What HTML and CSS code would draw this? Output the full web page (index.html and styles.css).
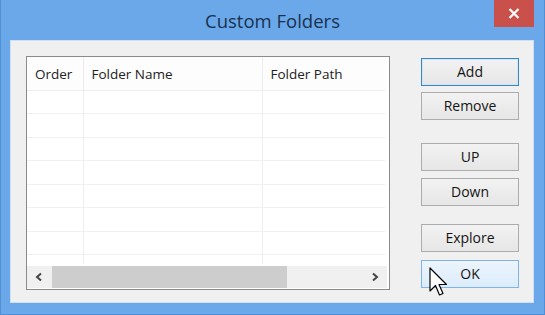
FILE: index.html
```html
<!DOCTYPE html>
<html lang="en">
<head>
  <meta charset="UTF-8">
  <meta name="viewport" content="width=device-width, initial-scale=1.0">
  <title>Custom Folders</title>
  <link rel="stylesheet" href="styles.css">
</head>
<body>
  <div class="window">
    <div class="titlebar">
      <span></span>
      <h1 class="title">Custom Folders</h1>
      <button class="close" type="button" aria-label="Close">
        <svg width="12" height="11" viewBox="0 0 12 11"><path d="M1.5 1 L10.5 10 M10.5 1 L1.5 10" stroke="#fff" stroke-width="2.2"/></svg>
      </button>
    </div>

    <div class="client">
      <div class="listview">
        <table class="grid">
          <thead>
            <tr>
              <th class="col-order">Order</th>
              <th class="col-name">Folder Name</th>
              <th class="col-path">Folder Path</th>
            </tr>
          </thead>
          <tbody>
            <tr><td></td><td></td><td></td></tr>
            <tr><td></td><td></td><td></td></tr>
            <tr><td></td><td></td><td></td></tr>
            <tr><td></td><td></td><td></td></tr>
            <tr><td></td><td></td><td></td></tr>
            <tr><td></td><td></td><td></td></tr>
            <tr><td></td><td></td><td></td></tr>
            <tr class="last"><td></td><td></td><td></td></tr>
          </tbody>
        </table>
        <div class="hscroll">
          <span class="arrow">
            <svg width="10" height="10" viewBox="0 0 10 10"><path d="M7 1.5 L3 5 L7 8.5" fill="none" stroke="#444" stroke-width="2"/></svg>
          </span>
          <div class="track"><div class="thumb"></div></div>
          <span class="arrow">
            <svg width="10" height="10" viewBox="0 0 10 10"><path d="M3 1.5 L7 5 L3 8.5" fill="none" stroke="#444" stroke-width="2"/></svg>
          </span>
        </div>
      </div>

      <div class="buttons">
        <button type="button" class="btn focused">Add</button>
        <button type="button" class="btn remove">Remove</button>
        <button type="button" class="btn up">UP</button>
        <button type="button" class="btn down">Down</button>
        <button type="button" class="btn explore">Explore</button>
        <button type="button" class="btn hover">OK</button>
      </div>
    </div>

    <svg class="cursor" width="20" height="32" viewBox="0 0 20 32">
      <path d="M1 1 L1 24 L6.5 18.5 L10.5 28 L14 26.5 L10 17.5 L17.5 17.5 Z" fill="#fff" stroke="#000" stroke-width="1.2" stroke-linejoin="round"/>
    </svg>
  </div>
</body>
</html>
```

FILE: styles.css
```css
body {
  margin: 0;
  padding: 0;
  font-family: "Open Sans", "Noto Sans", Arial, sans-serif;
}

.window {
  position: relative;
  width: 545px;
  height: 315px;
  box-sizing: border-box;
  background-color: #6aa8ea;
  border: 1px solid #4f8fd6;
  border-top: none;
  display: flex;
  flex-direction: column;
  padding: 0 10px 11px 9px;
}

.titlebar {
  flex-shrink: 0;
  height: 40px;
  display: grid;
  grid-template-columns: 1fr auto 1fr;
  align-items: start;
  margin: 0 -10px 0 -9px;
}

.title {
  margin: 0;
  padding-top: 8px;
  font-weight: normal;
  font-size: 18.5px;
  color: #19324f;
}

.close {
  justify-self: end;
  width: 40px;
  height: 27px;
  margin-right: 10px;
  border: none;
  padding: 0;
  background-color: #c9504b;
  display: flex;
  align-items: center;
  justify-content: center;
}

.client {
  flex: 1;
  background-color: #f0f0f0;
  border: 1px solid #cfe0f3;
  display: flex;
  align-items: flex-start;
  padding: 15px 14px 12px 15px;
}

.listview {
  flex-shrink: 0;
  width: 360px;
  height: 232px;
  border: 1px solid #8a8a8a;
  background-color: #fff;
  display: flex;
  flex-direction: column;
  padding-right: 2px;
}

.grid {
  border-collapse: collapse;
  table-layout: fixed;
  width: 358px;
  font-size: 13.5px;
  color: #222;
}

.grid th {
  box-sizing: border-box;
  height: 33px;
  font-weight: normal;
  text-align: left;
  padding: 1px 0 0 8px;
  background-color: #fdfdfd;
  border-right: 1px solid #ececec;
  border-bottom: 1px solid #eeeeee;
}

.col-order { width: 56px; }
.col-name { width: 179px; }

.grid td {
  height: 22.5px;
  padding: 0;
  border-right: 1px solid #f0f0f0;
  border-bottom: 1px solid #f0f0f0;
}

.grid .last td {
  height: 9px;
  border-bottom: none;
}

.grid th:last-child,
.grid td:last-child {
  border-right: none;
}

.hscroll {
  margin-top: auto;
  height: 22px;
  width: 360px;
  display: flex;
  background-color: #f0f0f0;
  margin-bottom: 1px;
}

.arrow {
  width: 24px;
  display: flex;
  align-items: center;
  justify-content: center;
}

.track {
  flex: 1;
  display: flex;
  align-items: stretch;
}

.thumb {
  width: 235px;
  margin: 0 0 0 1px;
  background-color: #cdcdcd;
}

.buttons {
  margin-left: 31px;
  width: 99px;
  display: flex;
  flex-direction: column;
}

.btn {
  height: 28px;
  margin: 0;
  font-family: "Open Sans", "Noto Sans", Arial, sans-serif;
  font-size: 14px;
  color: #151515;
  border: 1px solid #acacac;
  background: linear-gradient(#f2f2f2, #e6e6e6);
  padding: 0 0 1px;
}

.btn.focused {
  margin-top: 2px;
  border: 1px solid #3a87c8;
  box-shadow: inset 0 0 0 1px #d2e6f7;
}

.btn.remove { margin-top: 6px; }
.btn.up { margin-top: 23px; }
.btn.down { margin-top: 7px; }
.btn.explore { margin-top: 18px; }

.btn.hover {
  margin-top: 8px;
  border-color: #7eb4ea;
  background: linear-gradient(#ecf4fc, #dcecfc);
}

.cursor {
  position: absolute;
  left: 428px;
  top: 267px;
}
```
